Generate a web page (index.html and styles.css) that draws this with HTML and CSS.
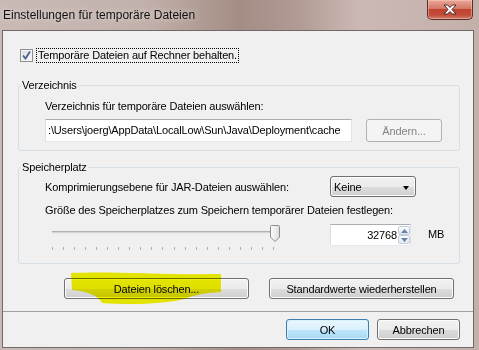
FILE: index.html
```html
<!DOCTYPE html>
<html lang="de">
<head>
  <meta charset="UTF-8">
  <title>Einstellungen für temporäre Dateien</title>
  <link rel="stylesheet" href="styles.css">
</head>
<body>
  <div class="window">
    <div class="titlebar">
      <span class="title">Einstellungen für temporäre Dateien</span>
      <button class="close" title="Schließen">
        <svg width="16" height="11" viewBox="0 0 16 11">
          <path d="M2 1h3.5l2.5 2.5 2.5-2.5h3.5l-4 4.5 4 4.5h-3.5l-2.5-2.5-2.5 2.5h-3.5l4-4.5z" fill="#fff" stroke="#4a2a26" stroke-width="1"/>
        </svg>
      </button>
    </div>

    <div class="client">
      <label class="check-row">
        <span class="checkbox">
          <svg width="9" height="9" viewBox="0 0 9 9">
            <path d="M1 4.5l2.5 3 4.5-7" fill="none" stroke="#4b5d92" stroke-width="1.8"/>
          </svg>
        </span>
        <span class="focus">Temporäre Dateien auf Rechner behalten.</span>
      </label>

      <fieldset class="group group-dir">
        <legend>Verzeichnis</legend>
        <div class="line">Verzeichnis für temporäre Dateien auswählen:</div>
        <div class="row">
          <div class="textfield">:\Users\joerg\AppData\LocalLow\Sun\Java\Deployment\cache</div>
          <button class="btn btn-change" disabled>Ändern...</button>
        </div>
      </fieldset>

      <fieldset class="group group-space">
        <legend>Speicherplatz</legend>
        <div class="row combo-row">
          <span class="row-label">Komprimierungsebene für JAR-Dateien auswählen:</span>
          <div class="combo">
            <span>Keine</span>
            <span class="arrow"></span>
          </div>
        </div>
        <div class="line line-size">Größe des Speicherplatzes zum Speichern temporärer Dateien festlegen:</div>
        <div class="row slider-row">
          <div class="slider">
            <div class="track"></div>
            <svg class="thumb" style="left: 218px;" width="10" height="17" viewBox="0 0 10 17">
              <defs>
                <linearGradient id="tg" x1="0" y1="0" x2="1" y2="0">
                  <stop offset="0" stop-color="#fdfdfd"/>
                  <stop offset="1" stop-color="#dcdcdc"/>
                </linearGradient>
              </defs>
              <path d="M1.5 0.5h7a1 1 0 0 1 1 1v10.5l-4.5 4.5l-4.5-4.5v-10.5a1 1 0 0 1 1-1z" fill="url(#tg)" stroke="#8b8b8b"/>
            </svg>
            <div class="ticks">
              <span></span><span></span><span></span><span></span><span></span><span></span><span></span>
              <span></span><span></span><span></span><span></span><span></span><span></span><span></span>
              <span></span><span></span><span></span><span></span><span></span><span></span><span></span>
            </div>
          </div>
          <div class="spinner">
            <span class="value">32768</span>
            <div class="spin">
              <span class="spin-btn"><svg width="7" height="4" viewBox="0 0 7 4"><path d="M0 4l3.5-4 3.5 4z" fill="#6b7fa8"/></svg></span>
              <span class="spin-btn"><svg width="7" height="4" viewBox="0 0 7 4"><path d="M0 0l3.5 4 3.5-4z" fill="#6b7fa8"/></svg></span>
            </div>
          </div>
          <span class="unit">MB</span>
        </div>
      </fieldset>

      <div class="actions">
        <button class="btn btn-wide">Dateien löschen...</button>
        <button class="btn btn-wide">Standardwerte wiederherstellen</button>
        <svg class="marker" width="160" height="40" viewBox="0 0 160 40">
          <defs>
            <filter id="soft" x="-10%" y="-20%" width="120%" height="140%">
              <feGaussianBlur stdDeviation="0.7"/>
            </filter>
          </defs>
          <path d="M1 1 C40 -1 90 3 151 2 L151 20 C132 21 122 24 114 27 C95 32 60 33 32 31 C30 26 20 19 2 18 Z" fill="#f2f200" filter="url(#soft)"/>
        </svg>
      </div>

      <div class="separator"></div>

      <div class="footer">
        <button class="btn btn-default">OK</button>
        <button class="btn">Abbrechen</button>
      </div>
    </div>
  </div>
</body>
</html>
```

FILE: styles.css
```css
body {
  margin: 0;
  width: 479px;
  height: 350px;
  overflow: hidden;
  font-family: "Liberation Sans", Arial, sans-serif;
  font-size: 11px;
  letter-spacing: -0.15px;
  color: #000;
  background: linear-gradient(90deg, #c9bab6 0%, #c2b1ab 30%, #a48d85 50%, #b09a93 62%, #cdb9b4 75%, #c4b0aa 100%);
}

.window {
  display: flex;
  flex-direction: column;
}

.titlebar {
  height: 30px;
  display: flex;
  justify-content: space-between;
  align-items: flex-start;
}
.title {
  margin: 8px 0 0 3px;
  font-size: 12px;
  letter-spacing: 0;
  color: #111;
  text-shadow: 0 0 6px rgba(255, 255, 255, 0.7);
}
.close {
  width: 46px;
  height: 20px;
  margin-right: 6px;
  padding: 0;
  border: 1px solid #5b2e27;
  border-top: none;
  border-radius: 0 0 5px 5px;
  background: linear-gradient(180deg, #e8a898 0%, #d47766 45%, #c1422e 50%, #c24e3c 80%, #d47f6c 100%);
  box-shadow: inset 0 0 0 1px rgba(255, 210, 200, 0.45);
  display: flex;
  justify-content: center;
  align-items: center;
}

.client {
  margin: 0 5px 0 2px;
  height: 316px;
  border: 1px solid #6f6a69;
  background-color: #f0f0f0;
  display: flex;
  flex-direction: column;
}

.check-row {
  margin: 17px 0 0 17px;
  display: flex;
  align-items: center;
  gap: 4px;
  height: 14px;
}
.checkbox {
  width: 11px;
  height: 11px;
  border: 1px solid #8e8f8f;
  background: linear-gradient(135deg, #dcdcdc, #fbfbfb);
  box-shadow: inset 0 0 0 1px #f4f4f4;
  display: flex;
  justify-content: center;
  align-items: center;
}
.focus {
  outline: 1px dotted #000;
  padding: 0 1px;
  line-height: 13px;
}

.group {
  margin: 0 0 0 15px;
  padding: 0 0 0 26px;
  border: 1px solid #d5dfe5;
  border-radius: 3px;
  box-sizing: content-box;
  width: 414px;
}
.group legend {
  margin-left: -24px;
  padding: 0 1px;
  line-height: 14px;
}
.group-dir {
  margin-top: 16px;
  padding-bottom: 8px;
}
.group-space {
  margin-top: 9px;
  padding-bottom: 13px;
}

.line {
  margin-top: 7px;
  line-height: 15px;
}
.row {
  display: flex;
  align-items: center;
}
.group-dir .row {
  margin-top: 5px;
  gap: 14px;
}
.textfield {
  width: 301px;
  height: 21px;
  padding: 0 2px;
  border: 1px solid #abadb3;
  border-color: #abadb3 #e2e3ea #e3e9ef #dbdfe6;
  background-color: #fff;
  line-height: 21px;
  white-space: nowrap;
  overflow: hidden;
}

.btn {
  height: 21px;
  padding: 0;
  font-family: inherit;
  font-size: 11px;
  letter-spacing: -0.15px;
  color: #000;
  border: 1px solid #707070;
  border-radius: 3px;
  background: linear-gradient(180deg, #f2f2f2 0%, #ebebeb 50%, #dddddd 51%, #cfcfcf 100%);
  box-shadow: inset 0 0 0 1px #fcfcfc;
}
.btn-change {
  width: 76px;
  height: 23px;
  color: #838383;
  border-color: #adb2b5;
  background: #f4f4f4;
  box-shadow: none;
}

.combo-row {
  margin-top: 2px;
}
.row-label {
  width: 285px;
}
.combo {
  width: 81px;
  height: 19px;
  padding-left: 3px;
  border: 1px solid #707070;
  border-radius: 3px;
  background: linear-gradient(180deg, #f2f2f2 0%, #ebebeb 50%, #dddddd 51%, #cfcfcf 100%);
  box-shadow: inset 0 0 0 1px #fcfcfc;
  display: flex;
  justify-content: space-between;
  align-items: center;
}
.arrow {
  margin: 2px 6px 0 0;
  border-left: 3.5px solid transparent;
  border-right: 3.5px solid transparent;
  border-top: 4px solid #000;
}
.line-size {
  margin-top: 6px;
}

.slider-row {
  margin-top: 6px;
  align-items: flex-start;
}
.slider {
  position: relative;
  margin: 1px 0 0 7px;
  width: 224px;
  height: 25px;
}
.track {
  margin-top: 6px;
  width: 222px;
  height: 1px;
  border-top: 1px solid #b0b0b0;
  border-bottom: 1px solid #e8e8e8;
  background: #d6d6d6;
}
.thumb {
  position: absolute;
  top: 0;
}
.ticks {
  margin-top: 13px;
  width: 222px;
  display: flex;
  justify-content: space-between;
}
.ticks span {
  width: 1px;
  height: 3px;
  background: #b0b0b0;
}

.spinner {
  margin-left: 54px;
  width: 79px;
  height: 20px;
  border: 1px solid #abadb3;
  border-color: #abadb3 #e2e3ea #e3e9ef #dbdfe6;
  background-color: #fff;
  display: flex;
  justify-content: flex-end;
  align-items: stretch;
}
.value {
  line-height: 20px;
  padding-right: 1px;
}
.spin {
  width: 12px;
  padding: 1px 0;
  display: flex;
  flex-direction: column;
}
.spin-btn {
  flex: 1;
  border: 1px solid #c5cedb;
  border-radius: 2px;
  background: linear-gradient(180deg, #fafcfe, #e3e9f1);
  display: flex;
  justify-content: center;
  align-items: center;
}
.unit {
  margin: 4px 0 0 17px;
}

.actions {
  position: relative;
  margin: 14px 0 0 61px;
  display: flex;
  gap: 20px;
}
.btn-wide {
  width: 185px;
}
.marker {
  position: absolute;
  left: 6px;
  top: -6px;
  mix-blend-mode: multiply;
}

.separator {
  margin-top: 12px;
  height: 1px;
  background-color: #a0a0a0;
}

.footer {
  margin: 7px 13px 0 0;
  display: flex;
  justify-content: flex-end;
  gap: 8px;
}
.footer .btn {
  width: 83px;
}
.btn-default {
  border-color: #3c7fb1;
  background: linear-gradient(180deg, #eaf6fd 0%, #d9f0fc 50%, #bee6fd 51%, #a7d9f5 100%);
  box-shadow: inset 0 0 0 1px #d7f1fd;
}
```
